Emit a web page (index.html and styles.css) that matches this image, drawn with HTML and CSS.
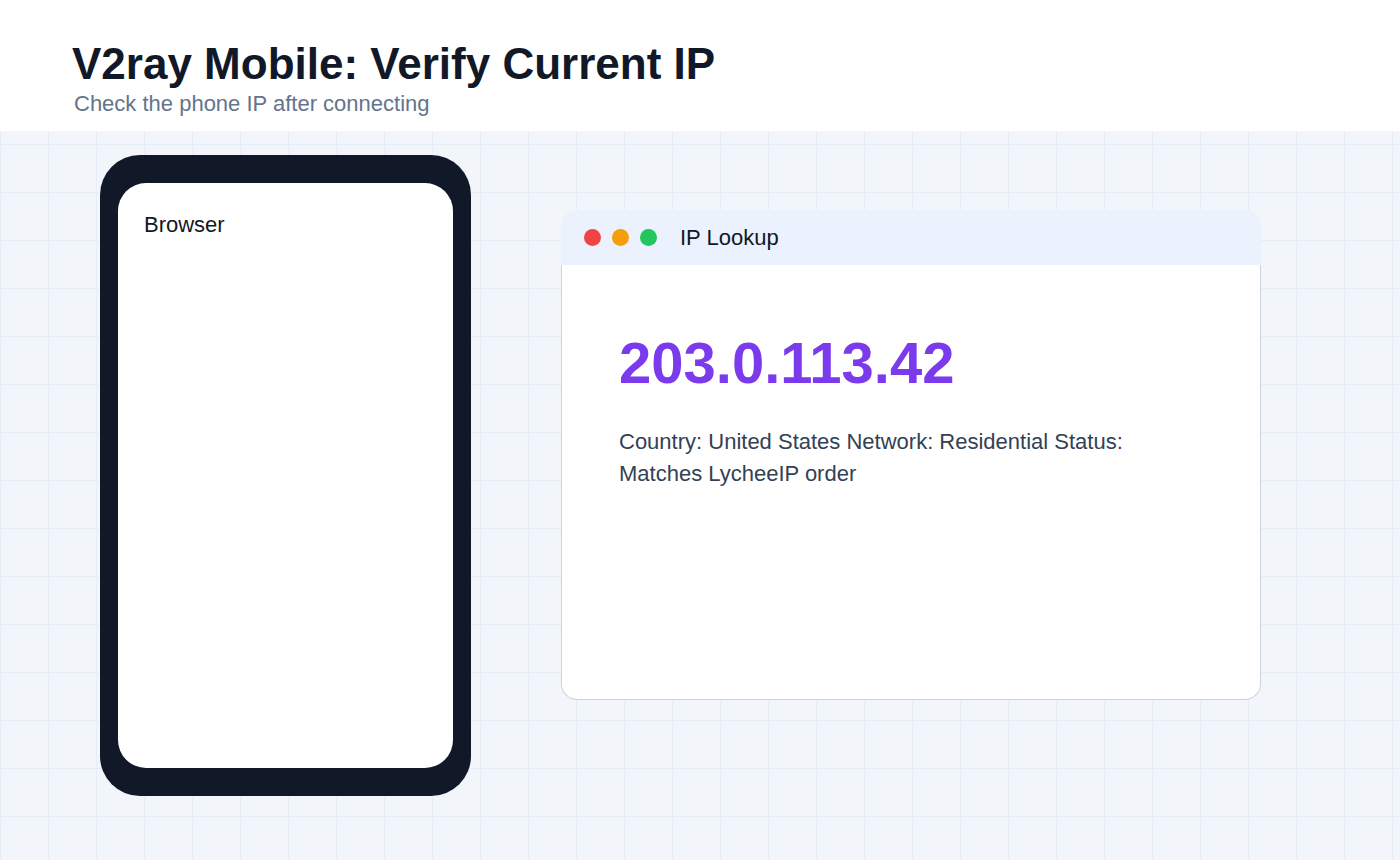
FILE: index.html
```html
<!DOCTYPE html>
<html lang="en">
<head>
<meta charset="utf-8">
<title>V2ray Mobile: Verify Current IP</title>
<link rel="stylesheet" href="styles.css">
</head>
<body>
<header class="page-header">
  <h1 class="title">V2ray Mobile: Verify Current IP</h1>
  <p class="subtitle">Check the phone IP after connecting</p>
</header>
<main class="stage">
  <div class="phone">
    <div class="screen">
      <div class="screen-label">Browser</div>
    </div>
  </div>
  <section class="window">
    <div class="window-bar">
      <span class="dot dot-red"></span>
      <span class="dot dot-amber"></span>
      <span class="dot dot-green"></span>
      <span class="window-title">IP Lookup</span>
    </div>
    <div class="window-body">
      <div class="ip">203.0.113.42</div>
      <p class="details">Country: United States Network: Residential Status: Matches LycheeIP order</p>
    </div>
  </section>
</main>
</body>
</html>
```

FILE: styles.css
```css
* { box-sizing: border-box; }

html, body {
  margin: 0;
  padding: 0;
  width: 1400px;
  height: 860px;
  overflow: hidden;
}

body {
  font-family: "Liberation Sans", Arial, sans-serif;
  background-color: #f2f5fa;
  background-image:
    linear-gradient(to right, #e5edf8 1px, transparent 1px),
    linear-gradient(to bottom, #e5edf8 1px, transparent 1px);
  background-size: 48px 48px;
  background-position: 0 0;
}

.page-header {
  height: 131px;
  background: #ffffff;
  padding: 38px 0 0 72px;
}

.title {
  margin: 0;
  font-size: 44px;
  line-height: 52px;
  font-weight: 700;
  color: #111827;
}

.subtitle {
  margin: 1px 0 0 2px;
  font-size: 22px;
  line-height: 26px;
  color: #64748b;
}

.stage {
  display: flex;
  align-items: flex-start;
  padding-left: 100px;
  gap: 90px;
}

.phone {
  margin-top: 24px;
  width: 371px;
  height: 641px;
  background: #111827;
  border-radius: 40px;
  padding: 28px 18px;
}

.screen {
  width: 100%;
  height: 100%;
  background: #ffffff;
  border-radius: 28px;
  padding: 29px 26px;
}

.screen-label {
  font-size: 22px;
  line-height: 26px;
  color: #111827;
}

.window {
  margin-top: 79px;
  width: 700px;
  height: 490px;
  display: flex;
  flex-direction: column;
}

.window-bar {
  height: 55px;
  flex: none;
  background: #ebf2fe;
  border-radius: 16px 16px 0 0;
  display: flex;
  align-items: center;
  padding-left: 23px;
}

.dot {
  width: 17px;
  height: 17px;
  border-radius: 50%;
  margin-right: 11px;
}

.dot-red { background: #ef4444; }
.dot-amber { background: #f59e0b; }
.dot-green { background: #22c55e; margin-right: 23px; }

.window-title {
  font-size: 22px;
  color: #111827;
}

.window-body {
  flex: 1;
  background: #ffffff;
  border: 1.5px solid #cfd3de;
  border-top: none;
  border-radius: 0 0 16px 16px;
  padding: 63px 0 0 57px;
}

.ip {
  font-size: 58px;
  line-height: 70px;
  font-weight: 700;
  color: #7c3aed;
}

.details {
  margin: 28px 0 0 0;
  width: 540px;
  font-size: 22px;
  line-height: 32px;
  color: #334155;
}
```
